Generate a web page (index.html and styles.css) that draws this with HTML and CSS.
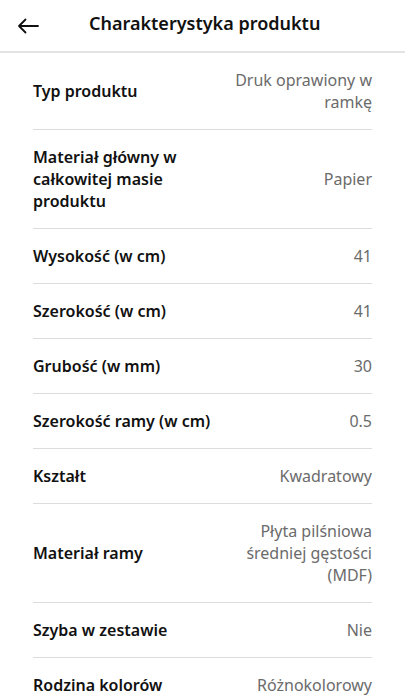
FILE: index.html
```html
<!DOCTYPE html>
<html lang="pl">
<head>
  <meta charset="UTF-8">
  <meta name="viewport" content="width=device-width, initial-scale=1.0">
  <title>Charakterystyka produktu</title>
  <link rel="stylesheet" href="styles.css">
</head>
<body>
  <header class="topbar">
    <button class="back" aria-label="Wstecz">
      <svg width="22" height="16" viewBox="0 0 22 16" fill="none" stroke="#111" stroke-width="1.8" stroke-linecap="round" stroke-linejoin="round">
        <path d="M21 8H2M8.5 1.5L2 8l6.5 6.5"/>
      </svg>
    </button>
    <h1>Charakterystyka produktu</h1>
  </header>

  <div class="specs">
    <div class="row">
      <div class="label">Typ produktu</div>
      <div class="value">Druk oprawiony w ramkę</div>
    </div>
    <div class="row">
      <div class="label">Materiał główny w całkowitej masie produktu</div>
      <div class="value">Papier</div>
    </div>
    <div class="row">
      <div class="label">Wysokość (w cm)</div>
      <div class="value">41</div>
    </div>
    <div class="row">
      <div class="label">Szerokość (w cm)</div>
      <div class="value">41</div>
    </div>
    <div class="row">
      <div class="label">Grubość (w mm)</div>
      <div class="value">30</div>
    </div>
    <div class="row">
      <div class="label">Szerokość ramy (w cm)</div>
      <div class="value">0.5</div>
    </div>
    <div class="row">
      <div class="label">Kształt</div>
      <div class="value">Kwadratowy</div>
    </div>
    <div class="row">
      <div class="label">Materiał ramy</div>
      <div class="value">Płyta pilśniowa średniej gęstości (MDF)</div>
    </div>
    <div class="row">
      <div class="label">Szyba w zestawie</div>
      <div class="value">Nie</div>
    </div>
    <div class="row">
      <div class="label">Rodzina kolorów</div>
      <div class="value">Różnokolorowy</div>
    </div>
  </div>
</body>
</html>
```

FILE: styles.css
```css
body {
  font-family: "Noto Sans", Arial, sans-serif;
  background-color: #fff;
  color: #111;
  margin: 0;
  padding: 0;
}
.topbar {
  display: flex;
  align-items: center;
  height: 51px;
  border-bottom: 2px solid #e3e3e3;
  padding: 0 0 0 17px;
}
.back {
  background: none;
  border: none;
  padding: 0;
  width: 22px;
  height: 16px;
  display: flex;
  cursor: pointer;
}
.topbar h1 {
  margin: -6px 0 0 50px;
  font-size: 18px;
  font-weight: 600;
  line-height: 24px;
}
.specs {
  padding: 0 33px;
}
.row {
  display: grid;
  grid-template-columns: 56fr 44fr;
  align-items: center;
  padding: 16px 0;
  border-bottom: 1px solid #dcdcdc;
  font-size: 16px;
  line-height: 22px;
}
.label {
  font-weight: 600;
}
.value {
  text-align: right;
  color: #6b6b6b;
}
```
